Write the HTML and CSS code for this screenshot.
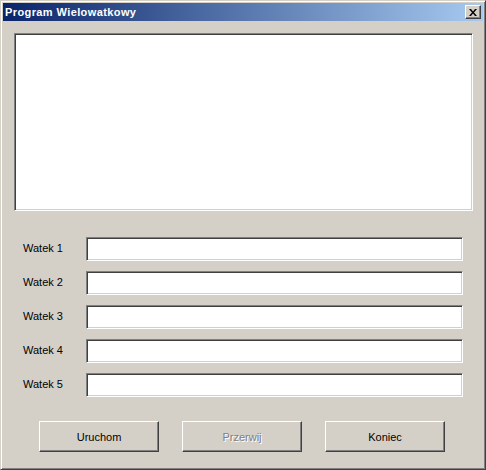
FILE: index.html
```html
<!DOCTYPE html>
<html>
<head>
<meta charset="utf-8">
<link rel="stylesheet" href="styles.css">
</head>
<body>
<div class="window">
  <div class="titlebar">
    <span class="title">Program Wielowatkowy</span>
    <button class="close" aria-label="Zamknij">
      <svg width="8" height="7" viewBox="0 0 8 7"><path d="M0 0h2l2 2.5 2-2.5h2l-3 3.5 3 3.5h-2l-2-2.5-2 2.5h-2l3-3.5z" fill="#000"/></svg>
    </button>
  </div>
  <div class="content">
    <div class="memo"></div>
    <div class="rows">
      <div class="row"><span class="label">Watek 1</span><div class="edit"></div></div>
      <div class="row"><span class="label">Watek 2</span><div class="edit"></div></div>
      <div class="row"><span class="label">Watek 3</span><div class="edit"></div></div>
      <div class="row"><span class="label">Watek 4</span><div class="edit"></div></div>
      <div class="row"><span class="label">Watek 5</span><div class="edit"></div></div>
    </div>
    <div class="buttons">
      <button class="btn">Uruchom</button>
      <button class="btn disabled">Przerwij</button>
      <button class="btn">Koniec</button>
    </div>
  </div>
</div>
</body>
</html>
```

FILE: styles.css
```css
html, body {
  margin: 0;
  padding: 0;
  background: #d4d0c8;
}
body {
  font-family: "Liberation Sans", Arial, sans-serif;
  font-size: 11px;
  color: #000;
}
.window {
  box-sizing: border-box;
  width: 486px;
  height: 470px;
  background: #d4d0c8;
  border-style: solid;
  border-width: 1px;
  border-color: #d4d0c8 #404040 #404040 #d4d0c8;
  box-shadow: inset 1px 1px 0 #ffffff, inset -1px -1px 0 #808080;
  padding: 2px;
  display: flex;
  flex-direction: column;
}
.titlebar {
  height: 18px;
  background: linear-gradient(to right, #0a246a, #a6caf0);
  display: flex;
  align-items: center;
  justify-content: space-between;
  padding: 0 2px 0 2px;
  flex: none;
}
.title {
  color: #fff;
  font-weight: bold;
  font-size: 11px;
  letter-spacing: 0.4px;
  line-height: 18px;
}
.close {
  box-sizing: border-box;
  width: 16px;
  height: 14px;
  padding: 0;
  margin: 0;
  background: #d4d0c8;
  border-style: solid;
  border-width: 1px;
  border-color: #ffffff #404040 #404040 #ffffff;
  box-shadow: inset -1px -1px 0 #808080;
  display: flex;
  align-items: center;
  justify-content: center;
}
.close svg { display: block; margin-left: -1px; }
.content {
  padding: 12px 0 0 11px;
  display: flex;
  flex-direction: column;
}
.memo {
  box-sizing: border-box;
  width: 459px;
  height: 178px;
  background: #fff;
  border-style: solid;
  border-width: 1px;
  border-color: #808080 #ffffff #ffffff #808080;
  box-shadow: inset 1px 1px 0 #404040, inset -1px -1px 0 #d4d0c8;
}
.rows {
  margin-top: 26px;
  display: flex;
  flex-direction: column;
  gap: 10px;
}
.row {
  display: flex;
  align-items: center;
  height: 24px;
}
.label {
  width: 63px;
  padding-left: 9px;
  box-sizing: content-box;
  margin-top: -2px;
}
.edit {
  box-sizing: border-box;
  width: 377px;
  height: 24px;
  background: #fff;
  border-style: solid;
  border-width: 1px;
  border-color: #808080 #ffffff #ffffff #808080;
  box-shadow: inset 1px 1px 0 #404040, inset -1px -1px 0 #d4d0c8;
}
.buttons {
  margin-top: 24px;
  padding-left: 25px;
  display: flex;
  gap: 23px;
}
.btn {
  box-sizing: border-box;
  width: 120px;
  height: 31px;
  margin: 0;
  padding: 0;
  background: #d4d0c8;
  font-family: "Liberation Sans", Arial, sans-serif;
  font-size: 11px;
  color: #000;
  border-style: solid;
  border-width: 1px;
  border-color: #ffffff #404040 #404040 #ffffff;
  box-shadow: inset -1px -1px 0 #808080;
}
.btn.disabled {
  color: #808080;
  text-shadow: 1px 1px 0 #ffffff;
}
```
